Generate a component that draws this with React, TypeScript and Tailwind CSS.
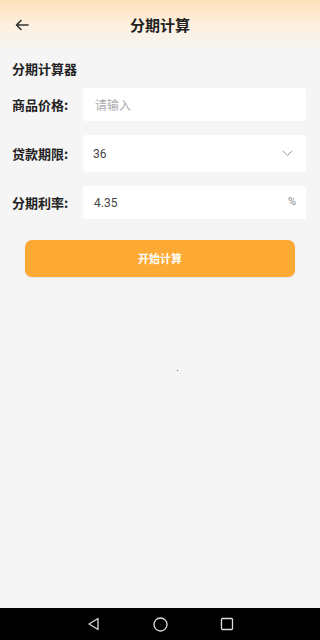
const font = { fontFamily: '"Noto Sans CJK SC", "Noto Sans", sans-serif' };

function Row({ label, children }: { label: string; children: React.ReactNode }) {
  return (
    <div className="flex items-center">
      <span className="w-[71px] shrink-0 text-[13px] font-bold text-[#222]">{label}</span>
      {children}
    </div>
  );
}

export default function App() {
  return (
    <div className="w-[320px] h-[640px] flex flex-col bg-[#f5f5f5] overflow-hidden" style={font}>
      <div className="h-[52px] shrink-0 relative flex items-center justify-center bg-gradient-to-b from-[#fde0b8] via-[#fdf0e0] to-[#f5f5f5]">
        <button className="absolute left-[12px] top-[15px] w-[20px] h-[20px] flex items-center justify-center">
          <svg width="16" height="16" viewBox="0 0 16 16" fill="none" stroke="#333" strokeWidth="1.6" strokeLinecap="round" strokeLinejoin="round">
            <path d="M14 8H2.5M7 3.5L2.5 8L7 12.5" />
          </svg>
        </button>
        <span className="text-[15px] font-bold text-[#222] -mt-[2px]">分期计算</span>
      </div>

      <div className="flex-1 flex flex-col px-[12px] pt-[7px]">
        <h2 className="text-[13px] font-bold text-[#222] leading-[20px] mb-[9px]">分期计算器</h2>
        <div className="flex flex-col gap-[14px]">
          <Row label="商品价格:">
            <div className="flex-1 h-[33px] mr-[2px] bg-white rounded-[3px] flex items-center px-[12px]">
              <span className="text-[12px] text-[#aaa]">请输入</span>
            </div>
          </Row>
          <Row label="贷款期限:">
            <div className="flex-1 h-[37px] mr-[2px] bg-white rounded-[3px] flex items-center justify-between pl-[10px] pr-[13px]">
              <span className="text-[12px] text-[#444]" style={{ fontFamily: "Roboto, sans-serif" }}>36</span>
              <svg width="11" height="7" viewBox="0 0 11 7" fill="none" stroke="#999" strokeWidth="1" strokeLinecap="round" strokeLinejoin="round">
                <path d="M1 1L5.5 5.5L10 1" />
              </svg>
            </div>
          </Row>
          <Row label="分期利率:">
            <div className="flex-1 h-[33px] mr-[2px] bg-white rounded-[3px] flex items-center justify-between pl-[11px] pr-[10px]">
              <span className="text-[12px] text-[#444]" style={{ fontFamily: "Roboto, sans-serif" }}>4.35</span>
              <span className="text-[11px] text-[#888]" style={{ fontFamily: "Roboto, sans-serif" }}>%</span>
            </div>
          </Row>
        </div>
        <button className="mt-[21px] mx-[13px] h-[37px] rounded-[7px] bg-[#fdaa35] text-white text-[11px] font-bold shadow-[0_1px_2px_rgba(0,0,0,0.08)]">
          开始计算
        </button>
        <div className="flex-1 relative">
          <span className="absolute left-[165px] top-[93px] w-[1px] h-[1px] bg-[#666]" />
        </div>
      </div>

      <div className="h-[32px] shrink-0 bg-black flex items-center justify-center gap-[52px]">
        <svg width="14" height="14" viewBox="0 0 14 14" fill="none" stroke="#ddd" strokeWidth="1.3" strokeLinejoin="round">
          <path d="M11 1.5V12.5L2 7Z" />
        </svg>
        <svg width="15" height="15" viewBox="0 0 15 15" fill="none" stroke="#ddd" strokeWidth="1.3">
          <circle cx="7.5" cy="7.5" r="6.5" />
        </svg>
        <svg width="14" height="14" viewBox="0 0 14 14" fill="none" stroke="#ddd" strokeWidth="1.3">
          <rect x="1.5" y="1.5" width="11" height="11" rx="1" />
        </svg>
      </div>
    </div>
  );
}
